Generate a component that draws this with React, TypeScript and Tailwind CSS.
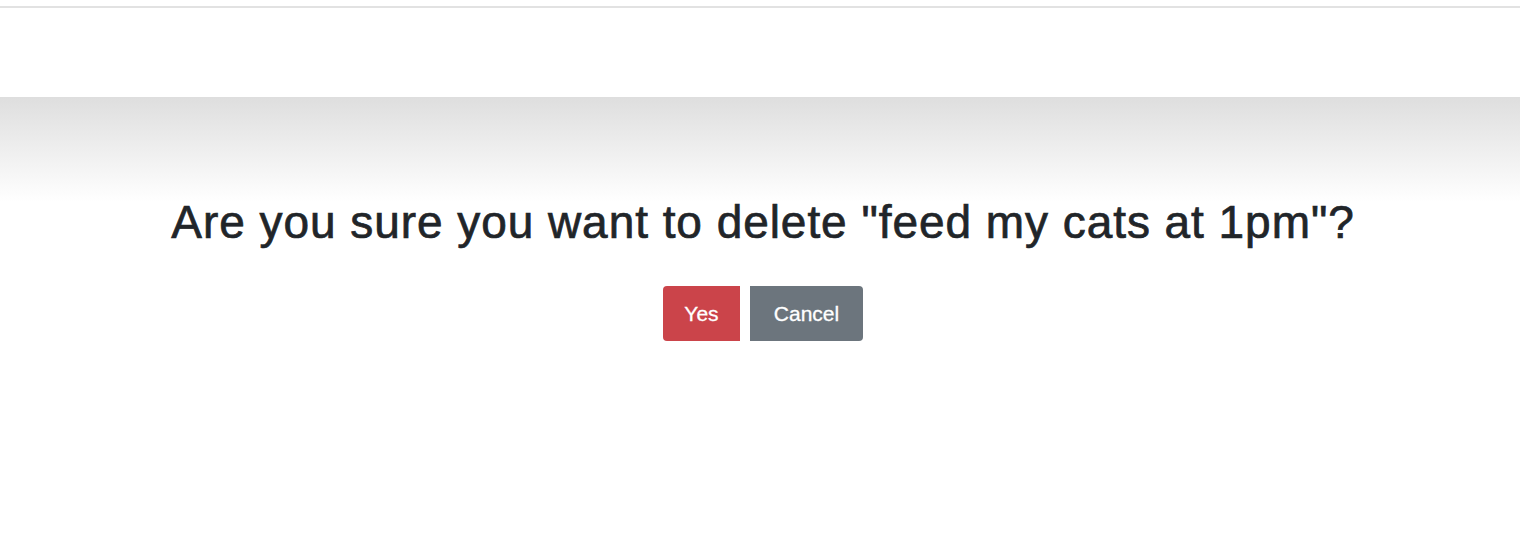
export default function App() {
  return (
    <div className="w-[1520px] h-[540px] bg-white" style={{ fontFamily: '"Liberation Sans", Arial, sans-serif' }}>
      <div className="h-[6px]" />
      <div className="h-[2px] bg-[#e2e2e2]" />
      <div className="h-[89px]" />
      <div className="bg-gradient-to-b from-[#dedede] to-white h-[105px]" />
      <div className="flex flex-col items-center pl-[6px]">
        <h1 className="text-[46px] leading-[55px] tracking-[0.95px] text-[#212529] -mt-[7px] [-webkit-text-stroke:0.7px_#212529]">
          Are you sure you want to delete "feed my cats at 1pm"?
        </h1>
        <div className="flex gap-[10px] mt-[36px]">
          <button className="h-[55px] w-[77px] bg-[#cb444a] text-white text-[21px] rounded-l-[4px] [-webkit-text-stroke:0.3px_white]">Yes</button>
          <button className="h-[55px] w-[113px] bg-[#6c757d] text-white text-[21px] rounded-r-[4px] [-webkit-text-stroke:0.3px_white]">Cancel</button>
        </div>
      </div>
    </div>
  );
}
